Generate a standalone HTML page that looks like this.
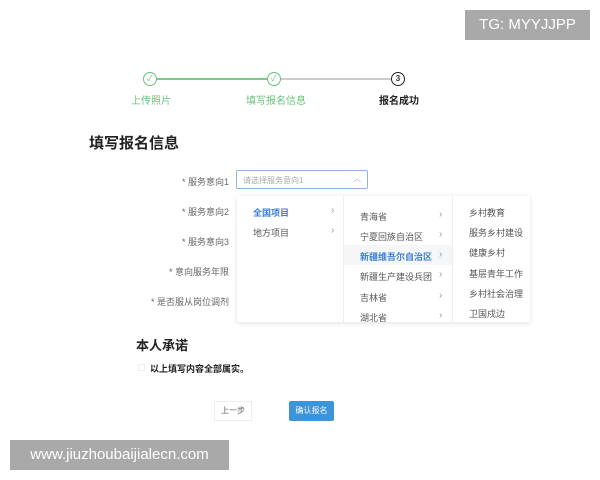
<!DOCTYPE html>
<html><head><meta charset="utf-8"><style>
*{margin:0;padding:0;box-sizing:border-box}
body{width:600px;height:480px;background:#fff;position:relative;overflow:hidden;font-family:"Liberation Sans","Noto Sans CJK SC",sans-serif;color:#333}
.a{position:absolute;white-space:nowrap}
.c{width:14px;height:14px;border-radius:50%;border:1.5px solid #6ac07a;background:#fff}
.lbl{font-size:9px;color:#666;text-align:right;width:120px}
.it{font-size:9px;color:#555}
.ar{font-size:10px;color:#999}
</style></head><body>
<div class="a" style="left:465px;top:10px;width:125px;height:30px;background:#a9a9a9;color:#fff;font-size:15px;line-height:30px;text-align:center">TG: MYYJJPP</div>

<div class="a" style="left:157px;top:78px;width:110px;height:2px;background:#7cc98a"></div>
<div class="a" style="left:281px;top:78px;width:110px;height:2px;background:#ccc"></div>
<div class="a c" style="left:143px;top:72px"></div>
<div class="a" style="left:147px;top:73px;font-size:8px;color:#6ac07a">✓</div>
<div class="a c" style="left:267px;top:72px"></div>
<div class="a" style="left:271px;top:73px;font-size:8px;color:#6ac07a">✓</div>
<div class="a" style="left:391px;top:72px;width:14px;height:14px;border-radius:50%;border:1.5px solid #222;font-size:8px;line-height:11px;text-align:center;font-weight:bold">3</div>
<div class="a" style="left:131px;top:92px;font-size:10px;color:#6ac07a">上传照片</div>
<div class="a" style="left:246px;top:92px;font-size:10px;color:#6ac07a">填写报名信息</div>
<div class="a" style="left:379px;top:92px;font-size:10px;color:#222;font-weight:bold">报名成功</div>

<div class="a" style="left:89px;top:132px;font-size:15px;font-weight:bold;color:#222">填写报名信息</div>

<div class="a lbl" style="left:109px;top:175px">* 服务意向1</div>
<div class="a" style="left:236px;top:170px;width:132px;height:19px;border:1px solid #8fb4e0;border-radius:2px"></div>
<div class="a" style="left:243px;top:175px;font-size:8px;color:#aaa">请选择服务意向1</div>
<div class="a" style="left:353px;top:173px;font-size:8px;color:#aaa">︿</div>
<div class="a lbl" style="left:109px;top:205px">* 服务意向2</div>
<div class="a lbl" style="left:109px;top:235px">* 服务意向3</div>
<div class="a lbl" style="left:109px;top:265px">* 意向服务年限</div>
<div class="a lbl" style="left:109px;top:295px">* 是否服从岗位调剂</div>

<div class="a" style="left:237px;top:196px;width:293px;height:126px;background:#fff;box-shadow:0 1px 5px rgba(0,0,0,.12)"></div>
<div class="a" style="left:343px;top:196px;width:1px;height:126px;background:#eee"></div>
<div class="a" style="left:452px;top:196px;width:1px;height:126px;background:#eee"></div>
<div class="a" style="left:344px;top:245px;width:108px;height:20px;background:#f4f6f8"></div>
<div class="a it" style="left:253px;top:206px;color:#3b7fd3;font-weight:bold">全国项目</div>
<div class="a ar" style="left:331px;top:205px">›</div>
<div class="a it" style="left:253px;top:226px">地方项目</div>
<div class="a ar" style="left:331px;top:225px">›</div>
<div class="a it" style="left:360px;top:210px">青海省</div>
<div class="a it" style="left:360px;top:230px">宁夏回族自治区</div>
<div class="a it" style="left:360px;top:250px;color:#3b7fd3;font-weight:bold">新疆维吾尔自治区</div>
<div class="a it" style="left:360px;top:270px">新疆生产建设兵团</div>
<div class="a it" style="left:360px;top:291px">吉林省</div>
<div class="a it" style="left:360px;top:311px">湖北省</div>
<div class="a ar" style="left:439px;top:209px">›</div>
<div class="a ar" style="left:439px;top:229px">›</div>
<div class="a ar" style="left:439px;top:249px">›</div>
<div class="a ar" style="left:439px;top:269px">›</div>
<div class="a ar" style="left:439px;top:290px">›</div>
<div class="a ar" style="left:439px;top:310px">›</div>
<div class="a it" style="left:469px;top:206px">乡村教育</div>
<div class="a it" style="left:469px;top:226px">服务乡村建设</div>
<div class="a it" style="left:469px;top:246px">健康乡村</div>
<div class="a it" style="left:469px;top:267px">基层青年工作</div>
<div class="a it" style="left:469px;top:287px">乡村社会治理</div>
<div class="a it" style="left:469px;top:307px">卫国戍边</div>

<div class="a" style="left:136px;top:335px;font-size:13px;font-weight:bold;color:#222">本人承诺</div>
<div class="a" style="left:138px;top:364px;width:7px;height:7px;border:1px solid #eee"></div>
<div class="a" style="left:150px;top:362px;font-size:9px;font-weight:bold;color:#222">以上填写内容全部属实。</div>

<div class="a" style="left:214px;top:401px;width:38px;height:20px;border:1px solid #eee;font-size:8px;color:#666;text-align:center;line-height:18px">上一步</div>
<div class="a" style="left:289px;top:401px;width:45px;height:20px;background:#3c94db;border-radius:2px;font-size:8px;color:#fff;text-align:center;line-height:20px">确认报名</div>

<div class="a" style="left:10px;top:440px;width:219px;height:30px;background:#a9a9a9;color:#fff;font-size:15px;line-height:30px;text-align:center">www.jiuzhoubaijialecn.com</div>
</body></html>
